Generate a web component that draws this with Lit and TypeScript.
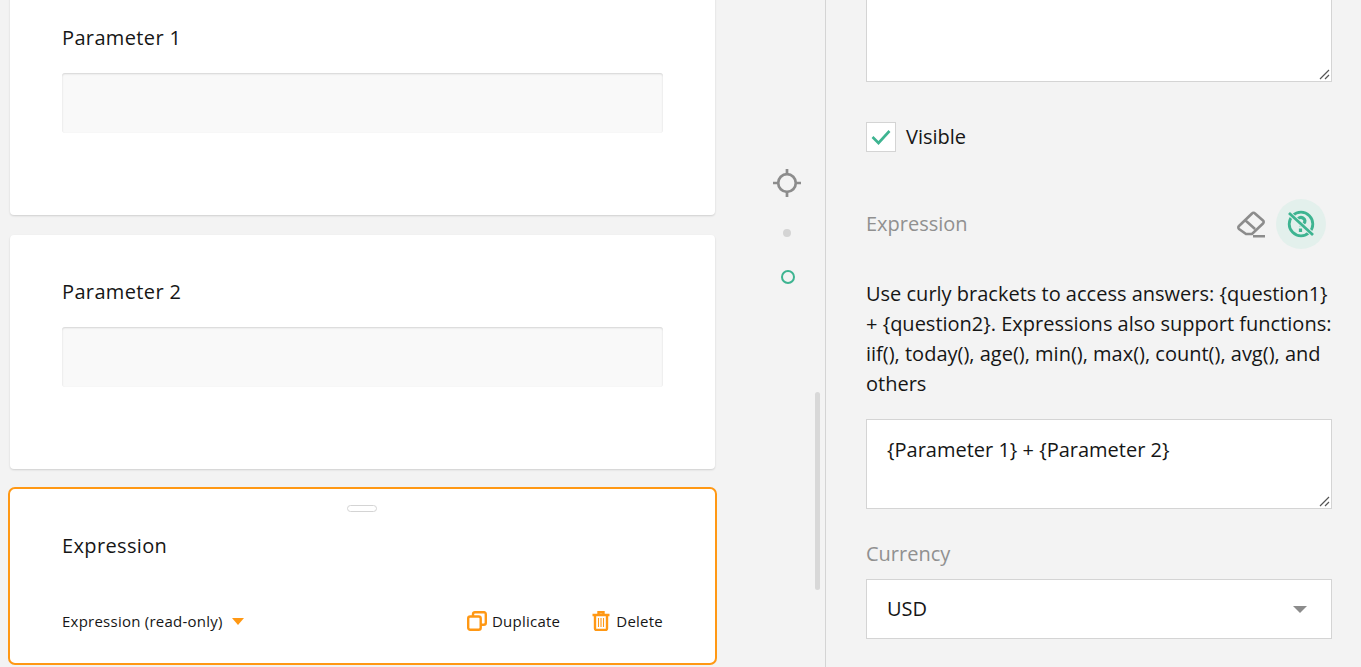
import { LitElement, html, css } from "lit";
import { customElement } from "lit/decorators.js";

@customElement("app-root")
export class AppRoot extends LitElement {
  static styles = css`
    :host { display: block; height: 667px; overflow: hidden; background: #f3f3f3; font-family: "Open Sans", sans-serif; color: #161616; }
    * { box-sizing: border-box; }
    .page { display: flex; height: 667px; overflow: hidden; position: relative; }
    .canvas { width: 760px; flex: none; display: flex; flex-direction: column; gap: 20px; padding: 0 45px 0 10px; margin-top: -19px; }
    .card { height: 234px; flex: none; background: #fff; border-radius: 4px; box-shadow: 0 1px 2px rgba(0,0,0,.15); padding: 45px 52px 0; }
    .title { font-size: 20px; line-height: 24px; height: 24px; font-weight: 500; letter-spacing: 0.36px; }
    .input { height: 60px; margin-top: 23px; background: #f9f9f9; border-radius: 3px; box-shadow: inset 0 1px 2px rgba(0,0,0,.15); }
    .selected { height: 178px; margin: -2px -2px 0; border: 2px solid #ff9814; border-radius: 7px; box-shadow: none; padding: 0 52px 0 52px; display: flex; flex-direction: column; }
    .handle { width: 30px; height: 7px; border: 1px solid #d4d4d4; border-radius: 4px; align-self: center; margin: 16px 2px 0 0; flex: none; }
    .selected .title { margin-top: 22px; }
    .actions { display: flex; align-items: center; margin-top: 53px; font-size: 15px; line-height: 20px; font-weight: 500; letter-spacing: 0.24px; }
    .tri { width: 0; height: 0; border: 6.5px solid transparent; border-top: 7px solid #ff9814; border-bottom: 0; margin-left: 9px; margin-top: 1px; }
    .spacer { flex: 1; }
    .action { display: flex; align-items: center; gap: 5px; margin-left: 32px; }
    .action.del { gap: 6px; }
    .action svg { display: block; }
    .rail { width: 71px; flex: none; position: relative; display: flex; flex-direction: column; align-items: center; margin-left: -5px; padding: 168px 4px 0 0; border-right: 1px solid #d4d4d4; }
    .rail svg { margin-right: 2px; }
    .dot { width: 8px; height: 8px; background: #d4d4d4; border-radius: 50%; margin: 31px 2px 0 0; }
    .ring { width: 14px; height: 14px; border: 2px solid #3eb491; border-radius: 50%; margin-top: 33px; }
    .thumb { position: absolute; left: 60px; top: 392px; width: 5px; height: 198px; border-radius: 3px; background: #d8d8d8; }
    .panel { flex: none; width: 466px; margin-left: 40px; display: flex; flex-direction: column; }
    .ta { background: #fff; border: 1px solid #d4d4d4; position: relative; flex: none; font-size: 20px; line-height: 26px; padding: 17px 20px; }
    .ta.first { height: 100px; margin-top: -18px; }
    .ta.second { height: 90px; margin-top: 20px; }
    .grip { position: absolute; right: 1px; bottom: 1px; display: block; }
    .check { display: flex; align-items: center; gap: 10px; margin-top: 40px; font-size: 20px; line-height: 30px; }
    .box { width: 30px; height: 30px; background: #fff; border: 1px solid #d4d4d4; display: flex; align-items: center; justify-content: center; }
    .head { display: flex; align-items: center; margin-top: 47px; height: 50px; margin-right: 6px; }
    .label { font-size: 20px; line-height: 26px; color: #909090; }
    .eraser { margin-right: 9px; display: block; }
    .circle { width: 50px; height: 50px; border-radius: 50%; background: #e3f0ec; display: flex; align-items: center; justify-content: center; }
    .desc { font-size: 20px; line-height: 30px; margin-top: 30px; width: 470px; }
    .currency { margin-top: 32px; }
    .select { margin-top: 12px; height: 60px; background: #fff; border: 1px solid #d4d4d4; display: flex; align-items: center; padding: 0 24px 2px 20px; font-size: 20px; justify-content: space-between; }
    .sel-tri { width: 0; height: 0; border: 7px solid transparent; border-top: 7px solid #8c8c8c; border-bottom: 0; margin-top: 2px; }
  `;

  grip() {
    return html`<svg class="grip" width="11" height="11" viewBox="0 0 11 11" fill="none" stroke="#555" stroke-width="1.200"><path d="M1 10 10 1M6 10 10 6"/></svg>`;
  }

  render() {
    return html`<div class="page">
      <div class="canvas">
        <div class="card"><div class="title">Parameter 1</div><div class="input"></div></div>
        <div class="card"><div class="title">Parameter 2</div><div class="input"></div></div>
        <div class="card selected">
          <div class="handle"></div>
          <div class="title">Expression</div>
          <div class="actions">
            <span>Expression (read-only)</span><span class="tri"></span><span class="spacer"></span>
            <span class="action">
              <svg width="20" height="20" viewBox="0 0 20 20" fill="none" stroke="#ff9814" stroke-width="2.400"><rect x="1.200" y="5.500" width="12.500" height="13.300" rx="2"/><path d="M6 5V3a2 2 0 0 1 2-1.800h8.500a2 2 0 0 1 2.300 2v8.600a2 2 0 0 1-2 2H14"/></svg>
              Duplicate</span>
            <span class="action del">
              <svg width="18" height="20" viewBox="0 0 18 20" fill="none" stroke="#ff9814" stroke-width="2.400"><path d="M.5 4h17M6.500 3.500V1.200h5v2.300M3 4v13.500A1.500 1.500 0 0 0 4.500 19h9a1.500 1.500 0 0 0 1.500-1.500V4"/><path stroke-width="1.100" d="M6.500 7v9M9 7v9M11.500 7v9"/></svg>
              Delete</span>
          </div>
        </div>
      </div>
      <div class="rail">
        <svg width="30" height="30" viewBox="0 0 30 30" fill="none" stroke="#8c8c8c" stroke-width="2.700"><circle cx="15" cy="15" r="8.800"/><path d="M15 1v4.500M15 24.500V29M1 15h4.500M24.500 15H29"/></svg>
        <span class="dot"></span>
        <span class="ring"></span>
        <span class="thumb"></span>
      </div>
      <div class="panel">
        <div class="ta first">${this.grip()}</div>
        <div class="check">
          <span class="box"><svg width="22" height="18" viewBox="0 0 22 18" fill="none" stroke="#3eb491" stroke-width="2.600"><path d="M2.500 9l6 6L19.500 3"/></svg></span>
          Visible
        </div>
        <div class="head">
          <span class="label">Expression</span><span class="spacer"></span>
          <svg class="eraser" width="32" height="28" viewBox="0 0 32 28" fill="none" stroke="#8c8c8c" stroke-width="2.600"><path d="M4 16 17 3.500a2 2 0 0 1 3 0l8 7a2 2 0 0 1 0 3L17 24h-6l-7-5a2 2 0 0 1 0-3zM10 10l10 9M18 26.200h12"/></svg>
          <span class="circle"><svg width="30" height="30" viewBox="0 0 30 30" fill="none" stroke="#3eb491" stroke-width="2.800"><circle cx="15" cy="15" r="11.800"/><path stroke-width="3.200" d="M11 11.500a4 3.500 0 1 1 6.500 3.200c-1 .6-2.500 1.300-2.500 2.800M14.500 19.500v3.500"/><path stroke="#e3f0ec" stroke-width="4.500" d="M5 6l20 18"/><path d="M3 4l24 22"/></svg></span>
        </div>
        <div class="desc">Use curly brackets to access answers: {question1} + {question2}. Expressions also support functions: iif(), today(), age(), min(), max(), count(), avg(), and others</div>
        <div class="ta second">{Parameter 1} + {Parameter 2}${this.grip()}</div>
        <div class="label currency">Currency</div>
        <div class="select">USD<span class="sel-tri"></span></div>
      </div>
    </div>`;
  }
}
